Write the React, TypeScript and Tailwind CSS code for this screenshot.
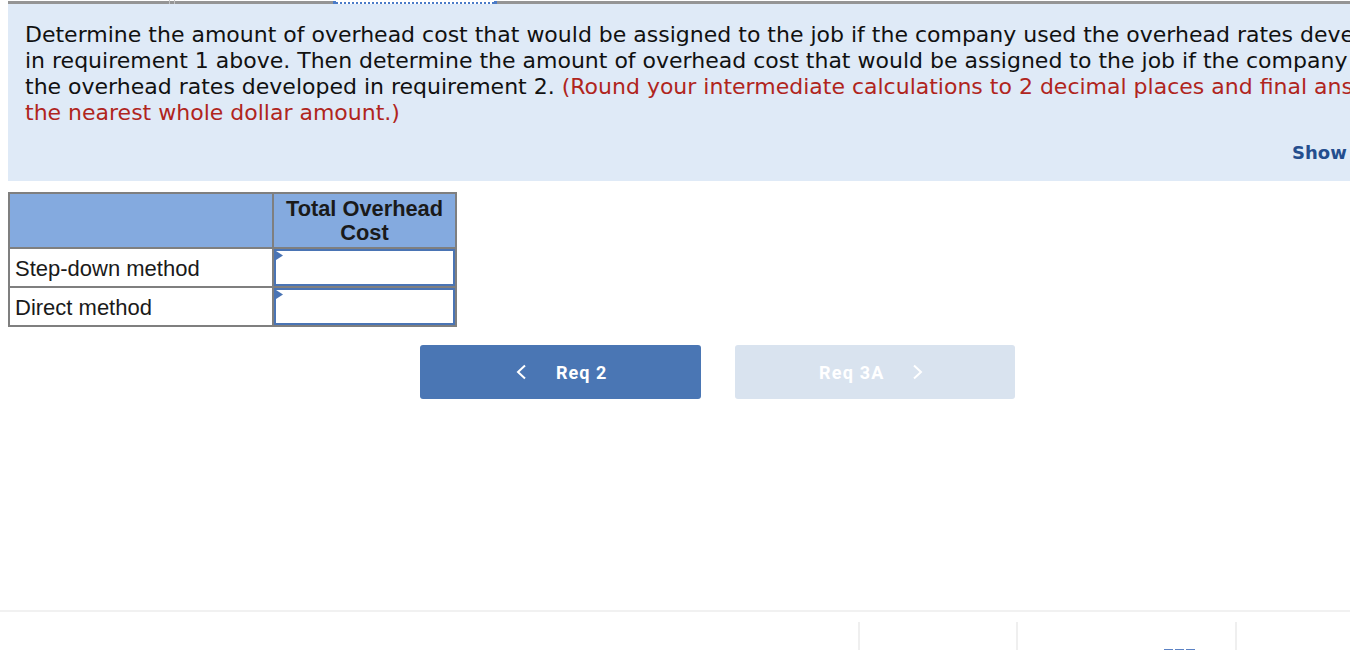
import React from "react";

function InputCell() {
  return (
    <div className="relative bg-white border-2 border-[#4a74b4] h-full">
      <svg className="absolute left-0 top-0" width="7" height="9" viewBox="0 0 7 9">
        <polygon points="0,0 7,4.5 0,9" fill="#4a74b4" />
      </svg>
    </div>
  );
}

export default function App() {
  return (
    <div className="w-[1350px] h-[650px] overflow-hidden bg-white relative">
      {/* tab strip */}
      <div className="flex h-[4px] w-[1500px]">
        <div className="w-[8px]" />
        <div className="w-[161px] mt-[1px] h-[3px] bg-[#959595]" />
        <div className="w-[1px] h-[4px] bg-[#c4c4c4]" />
        <div className="w-[4px] mt-[1px] h-[3px] bg-[#959595]" />
        <div className="w-[1px] h-[4px] bg-[#c4c4c4]" />
        <div className="w-[158px] mt-[1px] h-[3px] bg-[#959595]" />
        <div className="relative w-[164px] h-[4px]">
          <div className="absolute left-0 right-0 top-[2px] border-t-2 border-dotted border-[#4a7bc8]" />
          <div className="absolute left-0 top-[1px] w-[3px] h-[3px] bg-[#4a7bc8]" />
          <div className="absolute right-0 top-[1px] w-[3px] h-[3px] bg-[#4a7bc8]" />
        </div>
        <div className="flex-1 mt-[1px] h-[3px] bg-[#959595]" />
      </div>

      {/* question panel */}
      <div className="ml-[8px] bg-[#dfeaf7] pt-[18px] pb-[17px] pl-[17px] font-['DejaVu_Sans',Verdana,sans-serif] text-[22px] leading-[26px] text-[#111] whitespace-nowrap">
        <div>Determine the amount of overhead cost that would be assigned to the job if the company used the overhead rates developed</div>
        <div>in requirement 1 above. Then determine the amount of overhead cost that would be assigned to the job if the company used</div>
        <div>
          the overhead rates developed in requirement 2.{" "}
          <span className="text-[#b0251d]">(Round your intermediate calculations to 2 decimal places and final answers to</span>
        </div>
        <div className="text-[#b0251d]">the nearest whole dollar amount.)</div>
        <div className="mt-[16px] pl-[1267px] leading-[22px] text-[18px] font-bold text-[#244e8e]">Show Work</div>
      </div>

      {/* table */}
      <div className="ml-[8px] mt-[11px] w-[449px] grid grid-cols-[262px_181px] grid-rows-[53px_37px_37px] gap-[2px] p-[2px] bg-[#7f7f7f] font-['Liberation_Sans',Arial,sans-serif] text-[#1a1a1a]">
        <div className="bg-[#84aadf]" />
        <div className="bg-[#84aadf] flex items-center justify-center text-center font-bold text-[21.8px] leading-[24px]">
          Total Overhead
          <br />
          Cost
        </div>
        <div className="bg-white flex items-center pl-[5px] pt-[1px] text-[22px]">Step-down method</div>
        <InputCell />
        <div className="bg-white flex items-center pl-[5px] pt-[1px] text-[22px]">Direct method</div>
        <InputCell />
      </div>

      {/* nav buttons */}
      <div className="ml-[420px] mt-[18px] flex gap-[34px] font-['Roboto',sans-serif]">
        <div className="w-[281px] h-[54px] rounded-[3px] bg-[#4a76b4] flex items-center pl-[95px] text-white font-bold text-[18px] tracking-[1px]">
          <svg width="12" height="16" viewBox="0 0 12 16" className="mr-[29px]">
            <polyline points="10,1.5 3,8 10,14.5" fill="none" stroke="white" strokeWidth="2" />
          </svg>
          <span>Req 2</span>
        </div>
        <div className="w-[280px] h-[54px] rounded-[3px] bg-[#d9e3ef] flex items-center pl-[84px] text-white font-bold text-[18px] tracking-[1.2px]">
          <span>Req 3A</span>
          <svg width="12" height="16" viewBox="0 0 12 16" className="ml-[26px]">
            <polyline points="3,1.5 10,8 3,14.5" fill="none" stroke="white" strokeWidth="2" />
          </svg>
        </div>
      </div>

      {/* footer */}
      <div className="mt-[211px] h-[2px] bg-[#f1f1f1]" />
      <div className="flex pt-[10px] h-[39px]">
        <div className="w-[858px]" />
        <div className="w-[2px] h-full bg-[#efefef]" />
        <div className="w-[156px]" />
        <div className="w-[2px] h-full bg-[#efefef]" />
        <div className="w-[146px]" />
        <div className="flex items-end gap-[2px]">
          <div className="w-[9px] h-[2px] bg-[#5b82c4]" />
          <div className="w-[9px] h-[2px] bg-[#5b82c4]" />
          <div className="w-[9px] h-[2px] bg-[#5b82c4]" />
        </div>
        <div className="w-[40px]" />
        <div className="w-[2px] h-full bg-[#efefef]" />
      </div>
    </div>
  );
}
